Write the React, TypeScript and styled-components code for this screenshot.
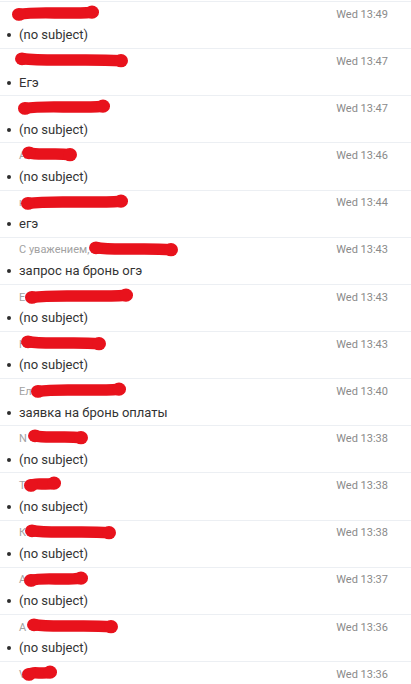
import styled, { createGlobalStyle } from "styled-components";

const GlobalStyle = createGlobalStyle`
  html, body {
    margin: 0;
    padding: 0;
    background: #ffffff;
  }
  body {
    font-family: Roboto, "Liberation Sans", Arial, sans-serif;
  }
`;

const List = styled.div`
  padding-top: 1px;
  background: #ffffff;
`;

const Row = styled.div`
  position: relative;
  box-sizing: border-box;
  height: 47.15px;
  border-top: 1px solid #eceff3;
  padding: 5.7px 23px 0 7px;
`;

const TopLine = styled.div`
  display: flex;
  justify-content: space-between;
  align-items: baseline;
  padding-left: 12px;
  height: 13px;
  line-height: 13px;
  font-size: 11px;
`;

const Sender = styled.span`
  color: #a2a2a2;
  white-space: nowrap;
`;

const Time = styled.span`
  color: #8a8a8a;
`;

const SubjectLine = styled.div`
  display: flex;
  align-items: center;
  margin-top: 6.8px;
  height: 16px;
  line-height: 16px;
  font-size: 13px;
  color: #333333;
`;

const Bullet = styled.span`
  width: 4px;
  height: 4px;
  border-radius: 50%;
  background: #2e2e2e;
  margin-right: 8px;
  flex: none;
`;

const Redaction = styled.svg<{ $left: number }>`
  position: absolute;
  top: 2px;
  left: ${(p) => p.$left}px;
  overflow: visible;
`;

const RED = "#e8121c";

function Scribble({ from, to, seed }: { from: number; to: number; seed: number }) {
  const w = to - from;
  const h = 18;
  const a = seed % 2 === 0 ? 1.4 : -1.2;
  const d = `M7 ${9 + a} C ${w * 0.3} ${9 - a * 1.5}, ${w * 0.6} ${9 + a * 1.2}, ${w - 7} ${9 - a * 0.6}`;
  return (
    <Redaction $left={from} width={w} height={h} viewBox={`0 0 ${w} ${h}`}>
      <path d={d} stroke={RED} strokeWidth={11.5} strokeLinecap="round" fill="none" />
      <ellipse cx={7} cy={9 + a} rx={7} ry={6.4} fill={RED} />
      <ellipse cx={w - 7} cy={9 - a * 0.6} rx={7} ry={6.6} fill={RED} />
    </Redaction>
  );
}

type Mail = {
  prefix: string;
  from: number;
  to: number;
  subject?: string;
  time: string;
};

const mails: Mail[] = [
  { prefix: "", from: 12, to: 99, subject: "(no subject)", time: "Wed 13:49" },
  { prefix: "", from: 15, to: 128, subject: "Егэ", time: "Wed 13:47" },
  { prefix: "", from: 18, to: 110, subject: "(no subject)", time: "Wed 13:47" },
  { prefix: "А", from: 22, to: 77, subject: "(no subject)", time: "Wed 13:46" },
  { prefix: "н", from: 21, to: 128, subject: "егэ", time: "Wed 13:44" },
  { prefix: "С уважением,", from: 89, to: 178, subject: "запрос на бронь огэ", time: "Wed 13:43" },
  { prefix: "Е", from: 25, to: 133, subject: "(no subject)", time: "Wed 13:43" },
  { prefix: "Н", from: 21, to: 106, subject: "(no subject)", time: "Wed 13:43" },
  { prefix: "Ел", from: 31, to: 126, subject: "заявка на бронь оплаты", time: "Wed 13:40" },
  { prefix: "N", from: 28, to: 88, subject: "(no subject)", time: "Wed 13:38" },
  { prefix: "Т", from: 24, to: 61, subject: "(no subject)", time: "Wed 13:38" },
  { prefix: "К", from: 25, to: 116, subject: "(no subject)", time: "Wed 13:38" },
  { prefix: "А", from: 24, to: 88, subject: "(no subject)", time: "Wed 13:37" },
  { prefix: "А", from: 27, to: 118, subject: "(no subject)", time: "Wed 13:36" },
  { prefix: "V", from: 22, to: 57, time: "Wed 13:36" },
];

export default function App() {
  return (
    <>
      <GlobalStyle />
      <List>
        {mails.map((m, i) => (
          <Row key={i}>
            <TopLine>
              <Sender>{m.prefix}</Sender>
              <Time>{m.time}</Time>
            </TopLine>
            {m.subject && (
              <SubjectLine>
                <Bullet />
                {m.subject}
              </SubjectLine>
            )}
            <Scribble from={m.from} to={m.to} seed={i} />
          </Row>
        ))}
      </List>
    </>
  );
}
